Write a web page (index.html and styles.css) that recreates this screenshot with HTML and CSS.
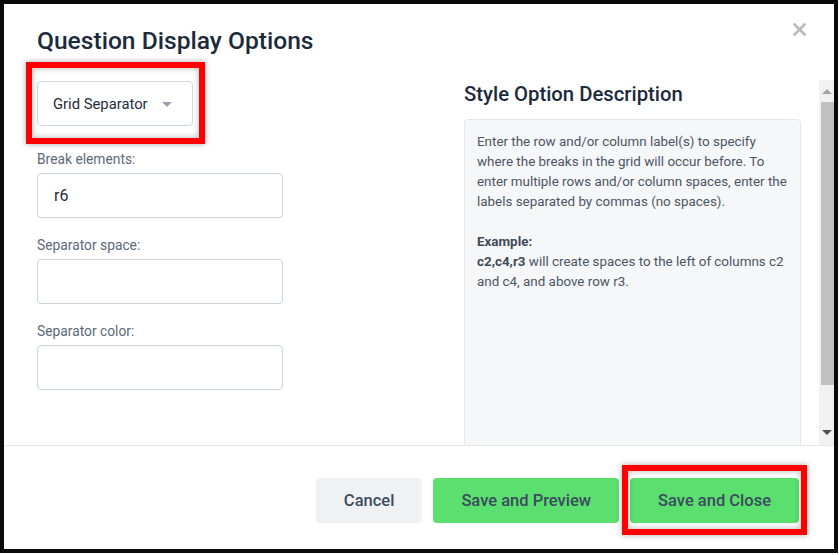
FILE: index.html
```html
<!DOCTYPE html>
<html lang="en">
<head>
    <meta charset="UTF-8">
    <meta name="viewport" content="width=device-width, initial-scale=1.0">
    <title>Question Display Options</title>
    <link rel="stylesheet" href="styles.css">
</head>
<body>
    <div class="frame">
        <div class="modal-header">
            <h1>Question Display Options</h1>
            <button type="button" class="close-btn" aria-label="Close">
                <svg width="13" height="13" viewBox="0 0 13 13">
                    <path d="M1.5 1.5 L11.5 11.5 M11.5 1.5 L1.5 11.5" stroke="#b9b9b9" stroke-width="2.6" stroke-linecap="square"/>
                </svg>
            </button>
        </div>

        <div class="modal-body">
            <div class="body-content">
                <div class="left-col">
                    <div class="select-box">
                        <span>Grid Separator</span>
                        <span class="caret"></span>
                    </div>

                    <div class="form-group">
                        <label for="break-elements">Break elements:</label>
                        <input type="text" id="break-elements" value="r6">
                    </div>

                    <div class="form-group">
                        <label for="separator-space">Separator space:</label>
                        <input type="text" id="separator-space">
                    </div>

                    <div class="form-group">
                        <label for="separator-color">Separator color:</label>
                        <input type="text" id="separator-color">
                    </div>
                </div>

                <div class="right-col">
                    <h2>Style Option Description</h2>
                    <div class="desc-box">
                        <p>Enter the row and/or column label(s) to specify where the breaks in the grid will occur before. To enter multiple rows and/or column spaces, enter the labels separated by commas (no spaces).</p>
                        <p><strong>Example:</strong><br><strong>c2,c4,r3</strong> will create spaces to the left of columns c2 and c4, and above row r3.</p>
                    </div>
                </div>
            </div>

            <div class="scrollbar">
                <div class="scroll-arrow up"></div>
                <div class="scroll-thumb"></div>
                <div class="scroll-arrow down"></div>
            </div>
        </div>

        <div class="modal-footer">
            <button type="button" class="btn btn-cancel">Cancel</button>
            <button type="button" class="btn btn-green">Save and Preview</button>
            <button type="button" class="btn btn-green">Save and Close</button>
        </div>

        <!-- red highlight marks drawn over the screenshot -->
        <div class="mark mark-select"></div>
        <div class="mark mark-save"></div>
    </div>
</body>
</html>
```

FILE: styles.css
```css
body {
    margin: 0;
    padding: 0;
    background: #ffffff;
    font-family: Roboto, "Liberation Sans", Arial, sans-serif;
    color: #1f2d3d;
}

.frame {
    position: relative;
    width: 838px;
    height: 553px;
    box-sizing: border-box;
    border: 4px solid #0a0a0a;
    background: #ffffff;
    display: flex;
    flex-direction: column;
    overflow: hidden;
}

.modal-header {
    height: 76px;
    box-sizing: border-box;
    padding: 23px 28px 0 33px;
    display: flex;
    justify-content: space-between;
    align-items: flex-start;
    flex-shrink: 0;
}

.modal-header h1 {
    margin: 0;
    font-size: 24.6px;
    line-height: 28px;
    font-weight: 500;
    color: #1c2a3c;
}

.close-btn {
    margin-top: -4px;
    padding: 0;
    border: none;
    background: none;
    width: 13px;
    height: 13px;
    cursor: pointer;
}

.close-btn svg {
    display: block;
}

.modal-body {
    height: 365px;
    display: flex;
    flex-shrink: 0;
    overflow: hidden;
}

.body-content {
    flex: 1;
    display: grid;
    grid-template-columns: 246px 337px;
    column-gap: 181px;
    padding: 1px 0 0 33px;
    align-items: start;
}

.select-box {
    width: 156px;
    height: 45px;
    box-sizing: border-box;
    border: 1px solid #d3d8de;
    border-radius: 4px;
    padding: 0 20px 0 15px;
    display: flex;
    align-items: center;
    justify-content: space-between;
    font-size: 14.8px;
    color: #1f2d3d;
    margin-bottom: 23px;
}

.caret {
    width: 0;
    height: 0;
    border-left: 5px solid transparent;
    border-right: 5px solid transparent;
    border-top: 5px solid #9aa1a9;
    margin-top: 1px;
}

.form-group {
    margin-bottom: 17px;
}

.form-group label {
    display: block;
    font-size: 13.8px;
    line-height: 20px;
    color: #5c6978;
    margin-bottom: 4px;
}

.form-group input {
    display: block;
    width: 246px;
    height: 45px;
    box-sizing: border-box;
    border: 1px solid #cdd3d9;
    border-radius: 4px;
    padding: 0 16px;
    font-family: Roboto, "Liberation Sans", Arial, sans-serif;
    font-size: 16px;
    color: #1f2d3d;
    background: #ffffff;
    outline: none;
}

.right-col h2 {
    margin: 1px 0 13px 0;
    font-size: 20.3px;
    line-height: 24px;
    font-weight: 500;
    color: #1c2a3c;
}

.desc-box {
    height: 340px;
    box-sizing: border-box;
    background: #f6f7f9;
    border: 1px solid #e4e7eb;
    border-radius: 4px;
    padding: 12px 12px;
    font-size: 13.4px;
    line-height: 20px;
    color: #4b5563;
}

.desc-box p {
    margin: 0 0 20px 0;
}

.desc-box strong {
    font-weight: 700;
    color: #3f4a58;
}

.scrollbar {
    width: 15px;
    background: #f1f1f1;
    display: flex;
    flex-direction: column;
    align-items: flex-end;
    flex-shrink: 0;
}

.scroll-arrow {
    width: 15px;
    height: 22px;
    display: flex;
    justify-content: center;
    align-items: center;
}

.scroll-arrow.up::before {
    content: "";
    border-left: 5px solid transparent;
    border-right: 5px solid transparent;
    border-bottom: 5px solid #a3a3a3;
}

.scroll-arrow.down {
    margin-top: auto;
    height: 26px;
}

.scroll-arrow.down::before {
    content: "";
    border-left: 5px solid transparent;
    border-right: 5px solid transparent;
    border-top: 5px solid #505050;
}

.scroll-thumb {
    width: 13px;
    height: 283px;
    background: #c1c1c1;
}

.modal-footer {
    flex: 1;
    border-top: 1px solid #e4e6e9;
    display: flex;
    justify-content: flex-end;
    align-items: flex-start;
    gap: 11px;
    padding: 32px 35px 0 0;
}

.btn {
    height: 45px;
    padding: 0 28px;
    border: none;
    border-radius: 4px;
    font-family: Roboto, "Liberation Sans", Arial, sans-serif;
    font-size: 16.5px;
    font-weight: 500;
    color: #3b4b5e;
    cursor: pointer;
}

.btn-cancel {
    background: #f0f1f3;
}

.btn-green {
    background: #5bdf6f;
}

.mark {
    position: absolute;
    box-sizing: border-box;
    border: 6px solid #ff0000;
    box-shadow: 0 0 6px rgba(0, 0, 0, 0.35), inset 0 0 6px rgba(0, 0, 0, 0.3);
}

.mark-select {
    left: 22px;
    top: 58px;
    width: 179px;
    height: 82px;
}

.mark-save {
    left: 618px;
    top: 461px;
    width: 185px;
    height: 70px;
}
```
